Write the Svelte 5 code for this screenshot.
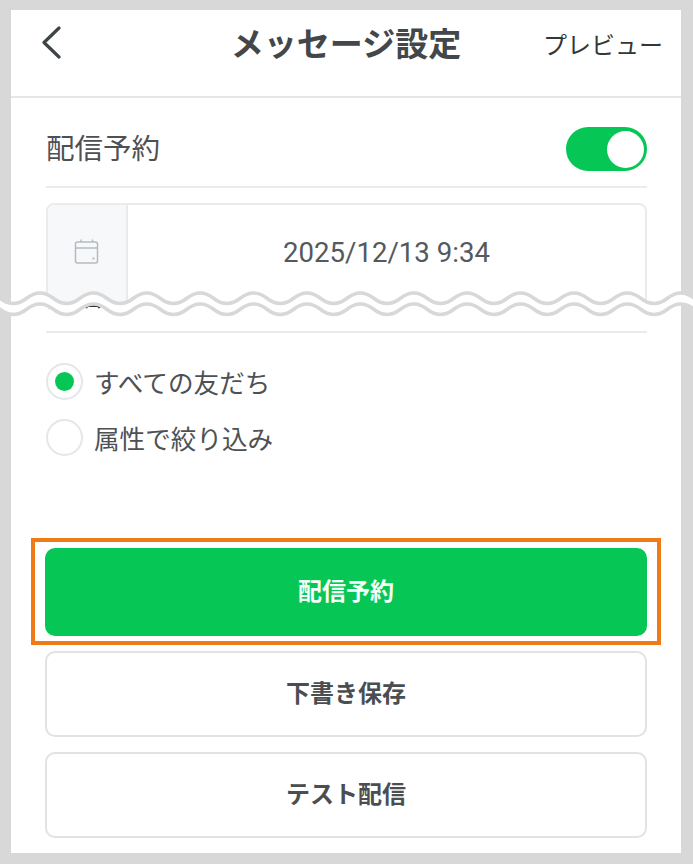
<script>
  const period = 53.4;
  const half = period / 2;
  const start = 40 - period * 2;
  const amp = 10.5;
  const gap = 11;
  const count = 30;

  // sine-ish segments, peak to trough and back
  function forward() {
    let d = "";
    for (let i = 0; i < count; i++) {
      const dir = i % 2 === 0 ? amp : -amp;
      d += ` c${half / 2} 0 ${half / 2} ${dir} ${half} ${dir}`;
    }
    return d;
  }
  function backward() {
    let d = "";
    for (let i = count - 1; i >= 0; i--) {
      const dir = i % 2 === 0 ? -amp : amp;
      d += ` c${-half / 2} 0 ${-half / 2} ${dir} ${-half} ${dir}`;
    }
    return d;
  }
  const top = 293;
  const lineA = `M${start} ${top}${forward()}`;
  const lineB = `M${start} ${top + gap}${forward()}`;
  const band = `${lineA} v${gap}${backward()} z`;
</script>

<div class="page">
  <div class="screen">
    <header class="header">
      <button class="back" aria-label="戻る">
        <svg width="22" height="34" viewBox="0 0 22 34">
          <path d="M19 3 L4 17.500 L19 32" fill="none" stroke="#3f4447" stroke-width="3.2" stroke-linecap="round" stroke-linejoin="round" />
        </svg>
      </button>
      <h1 class="title">メッセージ設定</h1>
      <span class="preview">プレビュー</span>
    </header>

    <div class="top">
      <div class="row">
        <span class="row-label">配信予約</span>
        <span class="toggle"><span class="knob"></span></span>
      </div>
      <div class="date-box">
        <div class="date-icon">
          <svg width="26" height="26" viewBox="0 0 26 26" fill="none" stroke="#b4babf" stroke-width="1.500">
            <rect x="1.500" y="3" width="22" height="21" rx="2" />
            <path d="M1.500 9 H23.500 M7 0.500 V3 M18.500 0.500 V3" />
            <path d="M18.500 19.500 h2" stroke-width="2" />
          </svg>
        </div>
        <div class="date-value">2025/12/13 9:34</div>
      </div>
    </div>

    <div class="bottom">
      <div class="cut-label"><span>配信先</span></div>
      <div class="radios">
        <label class="radio"><span class="dot on"></span>すべての友だち</label>
        <label class="radio"><span class="dot"></span>属性で絞り込み</label>
      </div>
      <div class="highlight">
        <button class="btn primary">配信予約</button>
      </div>
      <button class="btn">下書き保存</button>
      <button class="btn">テスト配信</button>
    </div>
  </div>

  <svg class="wave" width="693" height="40" viewBox="0 284 693 40">
    <path d={band} fill="#fff" />
    <path d={lineA} fill="none" stroke="#d8d8d8" stroke-width="3.500" />
    <path d={lineB} fill="none" stroke="#d8d8d8" stroke-width="3.500" />
  </svg>
</div>

<style>
  :global(body) {
    margin: 0;
    background: #d8d8d8;
    font-family: "Noto Sans CJK JP", "Noto Sans", sans-serif;
    color: #44484b;
  }
  .page {
    position: relative;
    width: 693px;
    height: 864px;
    padding: 10px 12px 11px 11px;
    box-sizing: border-box;
  }
  .screen {
    background: #fff;
    height: 100%;
    overflow: hidden;
  }
  .header {
    height: 86px;
    border-bottom: 2px solid #e6e6e6;
    display: grid;
    grid-template-columns: 1fr auto 1fr;
    align-items: start;
    padding: 0 18px;
  }
  .back {
    justify-self: start;
    margin: 15px 0 0 11px;
    padding: 0;
    border: 0;
    background: none;
    line-height: 0;
  }
  .title {
    margin: 9px 0 0;
    font-size: 33px;
    line-height: 46px;
    font-weight: 700;
    color: #43474a;
  }
  .preview {
    justify-self: end;
    margin-top: 16px;
    font-size: 24px;
    line-height: 36px;
    color: #33373a;
  }
  .top {
    padding: 0 34px 0 35px;
    height: 205px;
    overflow: hidden;
  }
  .row {
    height: 90px;
    border-bottom: 2px solid #ebebeb;
    display: flex;
    align-items: center;
    justify-content: space-between;
    padding-top: 14px;
    box-sizing: border-box;
  }
  .row-label {
    margin-bottom: 6px;
    font-size: 28.500px;
    color: #4d5154;
  }
  .toggle {
    width: 81px;
    height: 44px;
    border-radius: 22px;
    background: #06c755;
    display: flex;
    justify-content: flex-end;
    align-items: center;
    padding-right: 3px;
    box-sizing: border-box;
  }
  .knob {
    width: 37px;
    height: 37px;
    border-radius: 50%;
    background: #fff;
  }
  .date-box {
    margin-top: 15px;
    height: 130px;
    border: 2px solid #ebebeb;
    border-radius: 8px;
    display: flex;
    box-sizing: border-box;
    overflow: hidden;
  }
  .date-icon {
    width: 80px;
    flex: none;
    background: #f6f8fa;
    border-right: 2px solid #ebebeb;
    box-sizing: border-box;
    display: flex;
    justify-content: center;
    align-items: flex-start;
    padding-top: 34px;
  }
  .date-value {
    flex: 1;
    text-align: center;
    padding-top: 28px;
    font-family: Roboto, sans-serif;
    font-size: 27.600px;
    line-height: 40px;
    color: #55595c;
  }
  .bottom {
    padding: 0 34px;
  }
  .cut-label {
    height: 30px;
    margin-left: 1px;
    border-bottom: 2px solid #ebebeb;
    font-size: 28.500px;
    line-height: 20px;
    color: #33373a;
    box-sizing: border-box;
    overflow: hidden;
  }
  .cut-label span {
    display: block;
    margin-top: -19px;
  }
  .radios {
    margin-top: 30px;
    margin-left: 1px;
    display: flex;
    flex-direction: column;
    gap: 19px;
  }
  .radio {
    display: flex;
    align-items: center;
    gap: 11px;
    height: 37px;
    padding-bottom: 2px;
    box-sizing: content-box;
    margin-bottom: -2px;
    font-size: 25.600px;
    color: #4d5154;
  }
  .dot {
    width: 37px;
    height: 37px;
    border: 2px solid #e6e6e6;
    border-radius: 50%;
    box-sizing: border-box;
    display: flex;
    align-items: center;
    justify-content: center;
  }
  .dot.on::after {
    content: "";
    width: 19px;
    height: 19px;
    border-radius: 50%;
    background: #06c755;
  }
  .highlight {
    margin: 82px -14px 6px;
    border: 4px solid #ef7a16;
    padding: 6px 10px 5px;
  }
  .btn {
    display: flex;
    align-items: center;
    justify-content: center;
    width: 100%;
    height: 86px;
    margin-bottom: 15px;
    padding: 0 0 6px;
    border: 2px solid #e2e2e2;
    border-radius: 10px;
    background: #fff;
    font: 700 24px "Noto Sans CJK JP", sans-serif;
    color: #4a4e51;
  }
  .btn.primary {
    height: 88px;
    margin: 0;
    background: #06c755;
    border: 0;
    color: #f4fff8;
  }
  .wave {
    position: absolute;
    left: 0;
    top: 284px;
    display: block;
  }
</style>
